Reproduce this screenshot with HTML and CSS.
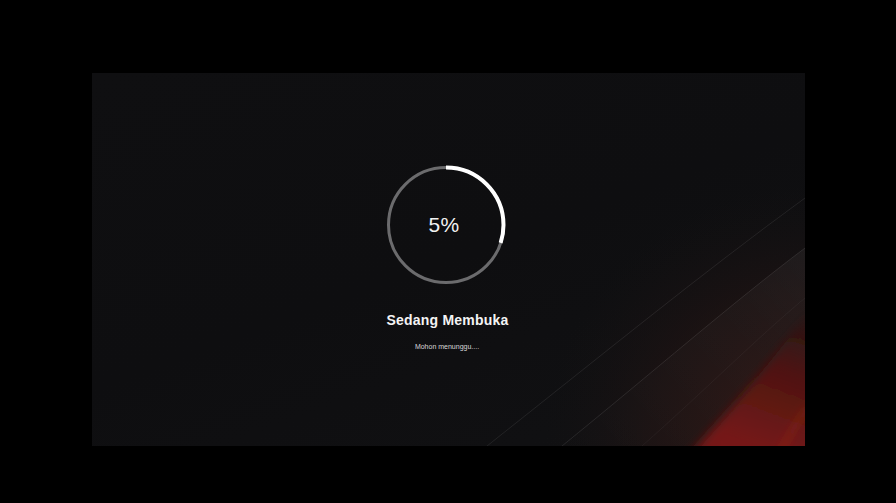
FILE: index.html
```html
<!DOCTYPE html>
<html lang="id">
<head>
<meta charset="utf-8">
<title>Sedang Membuka</title>
<link rel="stylesheet" href="styles.css">
</head>
<body>
<div class="screen">
  <div class="panel">
    <svg class="decor" viewBox="0 0 713 373" preserveAspectRatio="none" aria-hidden="true">
      <defs>
        <radialGradient id="warm" cx="713" cy="373" r="260" gradientUnits="userSpaceOnUse">
          <stop offset="0" stop-color="#3a1612" stop-opacity="0.9"/>
          <stop offset="0.6" stop-color="#221413" stop-opacity="0.6"/>
          <stop offset="1" stop-color="#161314" stop-opacity="0"/>
        </radialGradient>
        <linearGradient id="red" x1="660" y1="373" x2="713" y2="230" gradientUnits="userSpaceOnUse">
          <stop offset="0" stop-color="#7e1a16" stop-opacity="0.9"/>
          <stop offset="0.55" stop-color="#581311" stop-opacity="0.75"/>
          <stop offset="1" stop-color="#3a0e0c" stop-opacity="0"/>
        </linearGradient>
        <linearGradient id="sheen" x1="450" y1="373" x2="713" y2="150" gradientUnits="userSpaceOnUse">
          <stop offset="0" stop-color="#ffffff" stop-opacity="0"/>
          <stop offset="0.7" stop-color="#ffffff" stop-opacity="0.025"/>
          <stop offset="1" stop-color="#ffffff" stop-opacity="0.05"/>
        </linearGradient>
        <filter id="blur" filterUnits="userSpaceOnUse" x="0" y="0" width="800" height="450">
          <feGaussianBlur stdDeviation="5"/>
        </filter>
      </defs>
      <rect x="0" y="0" width="713" height="373" fill="url(#warm)"/>
      <path d="M 470 373 C 560 300 640 230 713 175 L 713 373 Z" fill="url(#sheen)"/>
      <path d="M 590 390 C 640 335 680 290 730 220 L 730 390 Z" fill="url(#red)" filter="url(#blur)"/>
      <path d="M 395 373 C 500 290 610 200 713 125" stroke="#ffffff" stroke-opacity="0.08" stroke-width="1" fill="none"/>
      <path d="M 470 373 C 560 300 640 230 713 175" stroke="#ffffff" stroke-opacity="0.09" stroke-width="1" fill="none"/>
      <path d="M 550 373 C 610 320 665 265 713 225" stroke="#ffffff" stroke-opacity="0.04" stroke-width="1" fill="none"/>
      <path d="M 688 380 C 698 360 706 348 716 334" stroke="#c23024" stroke-opacity="0.5" stroke-width="3" fill="none" filter="url(#blur)"/>
    </svg>
    <div class="loader">
      <svg class="ring" viewBox="0 0 120 120" aria-hidden="true">
        <circle cx="60" cy="60" r="57.5" fill="none" stroke="#6b6b6d" stroke-width="3"/>
        <circle cx="60" cy="60" r="57.5" fill="none" stroke="#ffffff" stroke-width="4"
          stroke-dasharray="108.4 400" transform="rotate(-90 60 60)"/>
      </svg>
      <span class="percent">5%</span>
    </div>
    <h1 class="title">Sedang Membuka</h1>
    <p class="sub">Mohon menunggu....</p>
  </div>
</div>
</body>
</html>
```

FILE: styles.css
```css
html, body {
  margin: 0;
  padding: 0;
  background: #000;
}
.screen {
  width: 896px;
  height: 503px;
  padding: 73px 0 0 92px;
  box-sizing: border-box;
  font-family: "Liberation Sans", Arial, sans-serif;
}
.panel {
  position: relative;
  width: 713px;
  height: 373px;
  overflow: hidden;
  background: linear-gradient(160deg, #0f0f11 0%, #0e0e10 50%, #111113 100%);
  display: flex;
  flex-direction: column;
  align-items: center;
  padding-top: 92px;
  box-sizing: border-box;
  color: #fff;
}
.decor {
  position: absolute;
  left: 0;
  top: 0;
  width: 713px;
  height: 373px;
}
.loader {
  position: relative;
  width: 120px;
  height: 120px;
  margin-right: 6px;
  display: flex;
  align-items: center;
  justify-content: center;
}
.ring {
  position: absolute;
  left: 0;
  top: 0;
  width: 120px;
  height: 120px;
}
.percent {
  position: relative;
  font-size: 21px;
  color: #f2f2f2;
  letter-spacing: 0.3px;
  margin-right: 3px;
}
.title {
  position: relative;
  margin: 27px 0 0;
  font-size: 14px;
  font-weight: bold;
  color: #f4f4f4;
  letter-spacing: 0.2px;
  margin-right: 2px;
}
.sub {
  position: relative;
  margin: 15px 0 0;
  font-size: 7px;
  color: #d8d8d8;
  margin-right: 3px;
}
```
